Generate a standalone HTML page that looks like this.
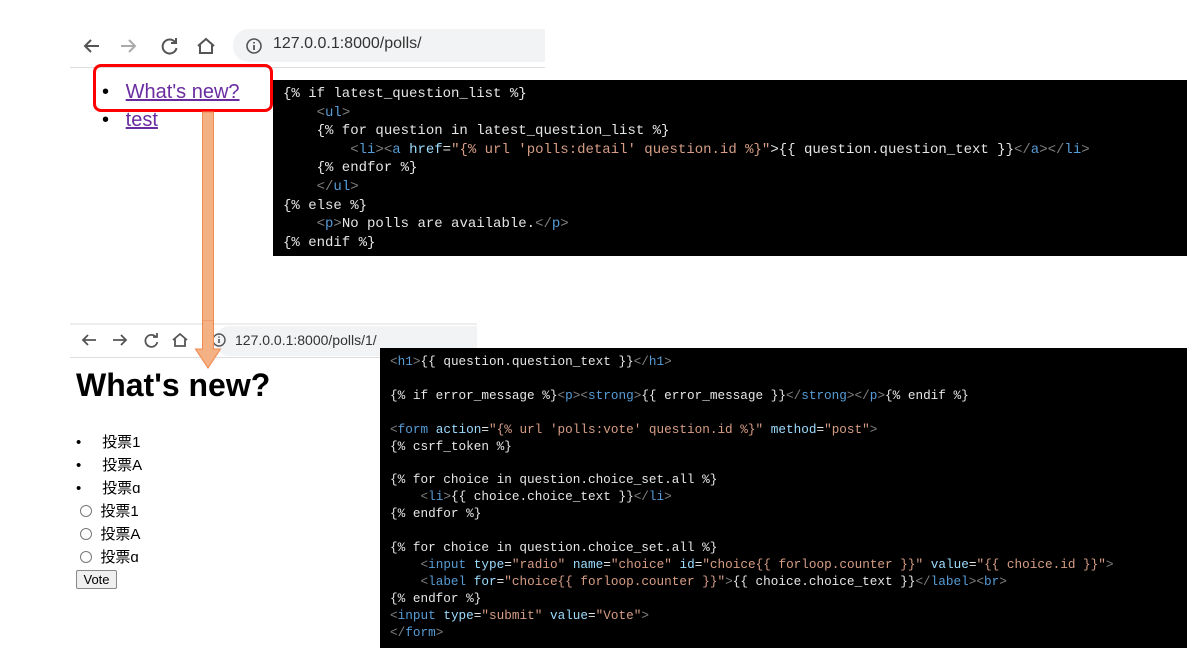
<!DOCTYPE html>
<html><head><meta charset="utf-8"><style>
*{margin:0;padding:0;box-sizing:border-box}
body{width:1200px;height:663px;background:#fff;position:relative;overflow:hidden;font-family:"Liberation Sans","Noto Sans CJK JP",sans-serif}
.abs{position:absolute}
.code{position:absolute;background:#000;color:#e6e6e6;font-family:"Liberation Mono","DejaVu Sans Mono",monospace;white-space:pre}
.t{color:#569cd6}.a{color:#9cdcfe}.s{color:#d69d85}.g{color:#808080}
.url{background:#f1f3f4;border-radius:16px 0 0 16px;color:#333}
svg{position:absolute}
</style></head><body>
<svg style="left:80px;top:34px" width="140" height="24" viewBox="0 0 140 24" fill="none" stroke-width="2">
<path d="M19 12H5M11 6l-6 6 6 6" stroke="#555"/>
<path d="M41 12h14M49 6l6 6-6 6" stroke="#aaa"/>
<path d="M95 8a7 7 0 1 0 1.5 6" stroke="#555"/><path d="M96 4v5h-5" stroke="#555"/>
<path d="M118 12l8-7 8 7M120 11v8h12v-8" stroke="#555"/>
</svg>
<div class="abs url" style="left:233px;top:29px;width:312px;height:33px"></div>
<svg style="left:245px;top:37px" width="18" height="18" viewBox="0 0 18 18"><circle cx="9" cy="9" r="7" fill="none" stroke="#555" stroke-width="1.6"/><path d="M9 8v5M9 5v1.5" stroke="#555" stroke-width="1.8"/></svg>
<div class="abs" style="left:273px;top:35px;font-size:16px;color:#333">127.0.0.1:8000/polls/</div>
<div class="abs" style="left:70px;top:67px;width:475px;height:1px;background:#ddd"></div>
<div class="abs" style="left:102px;top:78px;font-size:20px;line-height:28px">
<div>&#8226;&nbsp;&nbsp;&nbsp;<span style="color:#6a2ca0;text-decoration:underline">What's new?</span></div>
<div>&#8226;&nbsp;&nbsp;&nbsp;<span style="color:#6a2ca0;text-decoration:underline">test</span></div>
</div>
<div class="abs" style="left:93px;top:64px;width:180px;height:48px;border:3px solid #f00;border-radius:8px"></div>
<div class="abs" style="left:70px;top:323px;width:407px;height:2px;background:#eee"></div>
<svg style="left:194px;top:111px" width="28" height="260" viewBox="0 0 28 260"><path d="M8.5 1h11v237h7L14 257 1.5 238h7z" fill="#f4b183" stroke="#f08a50" stroke-width="1"/></svg>
<div class="code" style="left:273px;top:80px;width:914px;height:176px;font-size:14px;line-height:18.6px;padding:5px 0 0 10px">{% if latest_question_list %}
    <span class="g">&lt;</span><span class="t">ul</span><span class="g">&gt;</span>
    {% for question in latest_question_list %}
        <span class="g">&lt;</span><span class="t">li</span><span class="g">&gt;&lt;</span><span class="t">a</span> <span class="a">href</span>=<span class="s">"{% url 'polls:detail' question.id %}"</span>&gt;{{ question.question_text }}<span class="g">&lt;/</span><span class="t">a</span><span class="g">&gt;&lt;/</span><span class="t">li</span><span class="g">&gt;</span>
    {% endfor %}
    <span class="g">&lt;/</span><span class="t">ul</span><span class="g">&gt;</span>
{% else %}
    <span class="g">&lt;</span><span class="t">p</span><span class="g">&gt;</span>No polls are available.<span class="g">&lt;/</span><span class="t">p</span><span class="g">&gt;</span>
{% endif %}</div>
<svg style="left:80px;top:331px" width="110" height="20" viewBox="0 0 110 20" fill="none" stroke="#555" stroke-width="1.8">
<path d="M16 9H3M8 4L3 9l5 5"/>
<path d="M33 9h13M41 4l5 5-5 5"/>
<path d="M76 6a6 6 0 1 0 1.3 5"/><path d="M77 2v4h-4"/>
<path d="M93 9l7-6 7 6M95 8v7h10V8"/>
</svg>
<div class="abs url" style="left:215px;top:326px;width:262px;height:30px"></div>
<svg style="left:211px;top:332px" width="16" height="16" viewBox="0 0 16 16"><circle cx="8" cy="8" r="6" fill="none" stroke="#555" stroke-width="1.4"/><path d="M8 7v4M8 4.5v1.3" stroke="#555" stroke-width="1.6"/></svg>
<div class="abs" style="left:235px;top:332px;font-size:14px;color:#333">127.0.0.1:8000/polls/1/</div>
<div class="abs" style="left:70px;top:357px;width:310px;height:1px;background:#ddd"></div>
<svg style="left:194px;top:320px" width="28" height="52" viewBox="0 0 28 52"><path d="M8.5 0h11v29h7L14 48 1.5 29h7z" fill="#f4b183" stroke="#f08a50" stroke-width="1"/></svg>
<div class="abs" style="left:76px;top:367px;font-size:32px;font-weight:bold;color:#000">What's new?</div>
<div class="abs" style="left:76px;top:431px;font-size:15px;line-height:23px">
<div>&#8226;&nbsp;&nbsp;&nbsp;&nbsp;&nbsp;投票1</div><div>&#8226;&nbsp;&nbsp;&nbsp;&nbsp;&nbsp;投票A</div><div>&#8226;&nbsp;&nbsp;&nbsp;&nbsp;&nbsp;投票ɑ</div>
</div>
<div class="abs" style="left:80px;top:500px;font-size:15px;line-height:23px">
<div><span style="display:inline-block;width:12px;height:12px;border:1px solid #777;border-radius:50%;vertical-align:-1px"></span>&nbsp;&nbsp;投票1</div>
<div><span style="display:inline-block;width:12px;height:12px;border:1px solid #777;border-radius:50%;vertical-align:-1px"></span>&nbsp;&nbsp;投票A</div>
<div><span style="display:inline-block;width:12px;height:12px;border:1px solid #777;border-radius:50%;vertical-align:-1px"></span>&nbsp;&nbsp;投票ɑ</div>
</div>
<div class="abs" style="left:76px;top:570px;width:41px;height:19px;border:1px solid #888;border-radius:2px;background:#efefef;font-size:13px;text-align:center;line-height:17px">Vote</div>
<div class="code" style="left:380px;top:348px;width:807px;height:300px;font-size:12.7px;line-height:16.9px;padding:6px 0 0 10px"><span class="g">&lt;</span><span class="t">h1</span><span class="g">&gt;</span>{{ question.question_text }}<span class="g">&lt;/</span><span class="t">h1</span><span class="g">&gt;</span>

{% if error_message %}<span class="g">&lt;</span><span class="t">p</span><span class="g">&gt;&lt;</span><span class="t">strong</span><span class="g">&gt;</span>{{ error_message }}<span class="g">&lt;/</span><span class="t">strong</span><span class="g">&gt;&lt;/</span><span class="t">p</span><span class="g">&gt;</span>{% endif %}

<span class="g">&lt;</span><span class="t">form</span> <span class="a">action</span>=<span class="s">"{% url 'polls:vote' question.id %}"</span> <span class="a">method</span>=<span class="s">"post"</span><span class="g">&gt;</span>
{% csrf_token %}

{% for choice in question.choice_set.all %}
    <span class="g">&lt;</span><span class="t">li</span><span class="g">&gt;</span>{{ choice.choice_text }}<span class="g">&lt;/</span><span class="t">li</span><span class="g">&gt;</span>
{% endfor %}

{% for choice in question.choice_set.all %}
    <span class="g">&lt;</span><span class="t">input</span> <span class="a">type</span>=<span class="s">"radio"</span> <span class="a">name</span>=<span class="s">"choice"</span> <span class="a">id</span>=<span class="s">"choice{{ forloop.counter }}"</span> <span class="a">value</span>=<span class="s">"{{ choice.id }}"</span><span class="g">&gt;</span>
    <span class="g">&lt;</span><span class="t">label</span> <span class="a">for</span>=<span class="s">"choice{{ forloop.counter }}"</span><span class="g">&gt;</span>{{ choice.choice_text }}<span class="g">&lt;/</span><span class="t">label</span><span class="g">&gt;&lt;</span><span class="t">br</span><span class="g">&gt;</span>
{% endfor %}
<span class="g">&lt;</span><span class="t">input</span> <span class="a">type</span>=<span class="s">"submit"</span> <span class="a">value</span>=<span class="s">"Vote"</span><span class="g">&gt;</span>
<span class="g">&lt;/</span><span class="t">form</span><span class="g">&gt;</span></div>
</body></html>
